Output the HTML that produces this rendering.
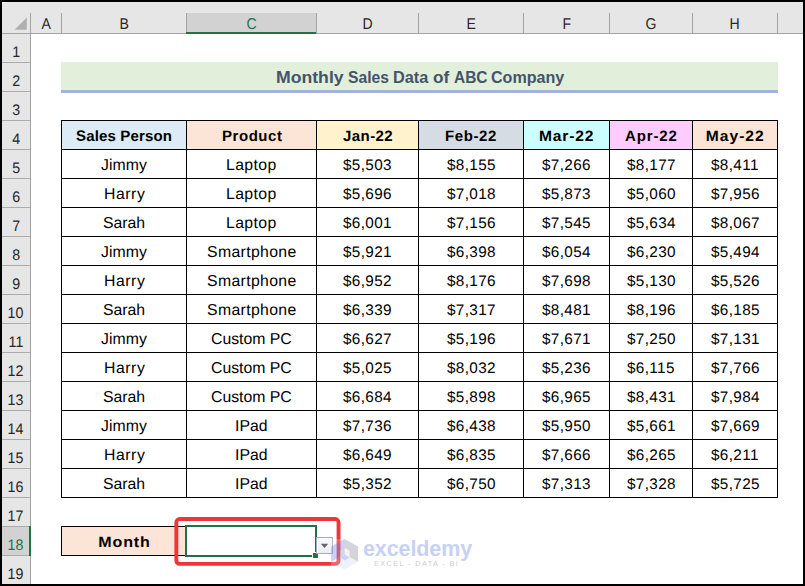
<!DOCTYPE html>
<html lang="en">
<head>
<meta charset="utf-8">
<title>Monthly Sales Data of ABC Company</title>
<style>
html,body{margin:0;padding:0;}
body{width:805px;height:586px;overflow:hidden;background:#000;font-family:"Liberation Sans",sans-serif;}
#sheet{position:absolute;left:2px;top:2px;width:801px;height:582px;background:#fff;overflow:hidden;}
.abs{position:absolute;}
#wrap{position:absolute;left:-2px;top:-2px;width:805px;height:586px;}
.hband{position:absolute;left:2px;top:2px;width:801px;height:31px;background:#E6E6E6;}
.hline{position:absolute;left:2px;top:33px;width:801px;height:1px;background:#A3A3A3;}
.rband{position:absolute;left:2px;top:34px;width:28px;height:550px;background:#E6E6E6;}
.rline{position:absolute;left:30px;top:13px;width:1px;height:571px;background:#A3A3A3;}
.csep{position:absolute;top:13px;width:1px;height:20px;background:#A3A3A3;}
.rsep{position:absolute;left:2px;width:28px;height:1px;background:#ABABAB;}
.cl{position:absolute;top:13px;height:20px;line-height:21px;text-align:center;color:#262626;font-size:15.6px;}
.cl span{display:inline-block;transform:rotate(0.03deg) scale(0.9,1);transform-origin:50% 80%;}
.rl span{display:inline-block;transform:rotate(0.03deg) scaleX(0.93);}
.rl{position:absolute;left:2px;width:28px;height:28px;line-height:36px;text-align:center;color:#262626;font-size:15.3px;}
.csel{background:#D2D2D2;color:#217346;}
.cselbar{position:absolute;height:2px;background:#217346;}
.title{position:absolute;left:61px;top:62px;width:717px;height:28px;background:#E2EFDA;border-bottom:3px solid #A0B4DE;text-align:center;line-height:29px;font-weight:bold;color:#44546A;font-size:17px;}
.tw{position:absolute;top:0;height:28px;line-height:31px;transform-origin:0 0;white-space:nowrap;}
.cell{position:absolute;height:28px;line-height:29px;text-align:center;color:#000;font-size:15.8px;white-space:nowrap;}
.hd{font-weight:bold;font-size:15px;}
.n{font-size:15.3px;letter-spacing:0.35px;}
.ub{display:inline-block;transform:translateY(-0.1px) rotate(0.03deg);}
.uc{display:inline-block;transform:translateY(0px) rotate(0.03deg);}
.u{display:inline-block;transform:rotate(0.03deg);margin-right:-0.35px;}
.vl{position:absolute;width:1px;background:#000;}
.hl{position:absolute;height:1px;background:#000;}

</style>
</head>
<body>
<div id="sheet"><div id="wrap">
<div class="hband"></div><div class="rband"></div>
<div class="abs" style="left:186px;top:13px;width:130px;height:19px;background:#D2D2D2"></div>
<div class="abs" style="left:2px;top:527px;width:27px;height:28px;background:#D2D2D2"></div>
<div class="abs" style="left:2px;top:2px;width:5px;height:1px;background:#F4F4F4"></div>
<div class="hline"></div><div class="rline"></div>
<div class="csep" style="left:61px"></div>
<div class="csep" style="left:186px"></div>
<div class="csep" style="left:316px"></div>
<div class="csep" style="left:418px"></div>
<div class="csep" style="left:523px"></div>
<div class="csep" style="left:609px"></div>
<div class="csep" style="left:692px"></div>
<div class="csep" style="left:777px"></div>
<div class="rsep" style="top:62px"></div>
<div class="rsep" style="top:91px"></div>
<div class="rsep" style="top:120px"></div>
<div class="rsep" style="top:149px"></div>
<div class="rsep" style="top:178px"></div>
<div class="rsep" style="top:207px"></div>
<div class="rsep" style="top:236px"></div>
<div class="rsep" style="top:265px"></div>
<div class="rsep" style="top:294px"></div>
<div class="rsep" style="top:323px"></div>
<div class="rsep" style="top:352px"></div>
<div class="rsep" style="top:381px"></div>
<div class="rsep" style="top:410px"></div>
<div class="rsep" style="top:439px"></div>
<div class="rsep" style="top:468px"></div>
<div class="rsep" style="top:497px"></div>
<div class="rsep" style="top:526px"></div>
<div class="rsep" style="top:555px"></div>
<div class="rsep" style="top:584px"></div>
<div class="cselbar" style="left:186px;top:32px;width:130px"></div>
<div class="abs" style="left:29px;top:526px;width:2px;height:30px;background:#217346"></div>
<svg class="abs" style="left:14px;top:17px" width="13" height="13" viewBox="0 0 13 13"><polygon points="12.8,0.4 12.8,12.8 0.5,12.8" fill="#B1B1B1"/></svg>
<div class="cl" style="left:31px;width:30px"><span>A</span></div>
<div class="cl" style="left:62px;width:124px"><span>B</span></div>
<div class="cl" style="left:187px;width:129px;color:#217346"><span>C</span></div>
<div class="cl" style="left:317px;width:101px"><span>D</span></div>
<div class="cl" style="left:419px;width:104px"><span>E</span></div>
<div class="cl" style="left:524px;width:85px"><span>F</span></div>
<div class="cl" style="left:610px;width:82px"><span>G</span></div>
<div class="cl" style="left:693px;width:84px"><span>H</span></div>
<div class="rl" style="top:34px"><span>1</span></div>
<div class="rl" style="top:63px"><span>2</span></div>
<div class="rl" style="top:92px"><span>3</span></div>
<div class="rl" style="top:121px"><span>4</span></div>
<div class="rl" style="top:150px"><span>5</span></div>
<div class="rl" style="top:179px"><span>6</span></div>
<div class="rl" style="top:208px"><span>7</span></div>
<div class="rl" style="top:237px"><span>8</span></div>
<div class="rl" style="top:266px"><span>9</span></div>
<div class="rl" style="top:295px"><span>10</span></div>
<div class="rl" style="top:324px"><span>11</span></div>
<div class="rl" style="top:353px"><span>12</span></div>
<div class="rl" style="top:382px"><span>13</span></div>
<div class="rl" style="top:411px"><span>14</span></div>
<div class="rl" style="top:440px"><span>15</span></div>
<div class="rl" style="top:469px"><span>16</span></div>
<div class="rl" style="top:498px"><span>17</span></div>
<div class="rl" style="top:527px;color:#217346"><span>18</span></div>
<div class="rl" style="top:556px"><span>19</span></div>
<div class="title">
<span class="tw" style="left:215.0px;transform:scaleX(1.0375)">Monthly</span>
<span class="tw" style="left:286.5px;transform:scaleX(0.9209)">Sales</span>
<span class="tw" style="left:332.0px;transform:scaleX(0.9556)">Data</span>
<span class="tw" style="left:372.4px;transform:scaleX(1.0133)">of</span>
<span class="tw" style="left:392.5px;transform:scaleX(0.9086)">ABC</span>
<span class="tw" style="left:429.8px;transform:scaleX(0.9461)">Company</span>
</div>
<div class="cell hd" style="left:62px;top:121px;width:124px;background:#DDEBF7"><span class="ub" style="letter-spacing:0.15px;margin-right:-0.15px">Sales Person</span></div>
<div class="cell hd" style="left:187px;top:121px;width:129px;background:#FCE4D6"><span class="ub" style="letter-spacing:0.55px;margin-right:-0.55px">Product</span></div>
<div class="cell hd" style="left:317px;top:121px;width:101px;background:#FFF2CC"><span class="ub" style="letter-spacing:0.43px;margin-right:-0.43px">Jan-22</span></div>
<div class="cell hd" style="left:419px;top:121px;width:104px;background:#D6DCE4"><span class="ub" style="letter-spacing:0.58px;margin-right:-0.58px">Feb-22</span></div>
<div class="cell hd" style="left:524px;top:121px;width:85px;background:#CCFFFF"><span class="ub" style="letter-spacing:0.8px;margin-right:-0.8px;transform:translateY(-0.1px) rotate(0.03deg) scaleX(1.04)">Mar-22</span></div>
<div class="cell hd" style="left:610px;top:121px;width:82px;background:#FFCCFF"><span class="ub" style="letter-spacing:0.88px;margin-right:-0.88px">Apr-22</span></div>
<div class="cell hd" style="left:693px;top:121px;width:84px;background:#FCE4D6"><span class="ub" style="letter-spacing:0.95px;margin-right:-0.95px;transform:translateY(-0.1px) rotate(0.03deg) scaleX(1.04)">May-22</span></div>
<div class="cell" style="left:62px;top:150px;width:124px"><span class="uc" style="letter-spacing:0.1px;margin-right:-0.1px">Jimmy</span></div>
<div class="cell" style="left:187px;top:150px;width:129px"><span class="uc" style="letter-spacing:0.4px;margin-right:-0.4px">Laptop</span></div>
<div class="cell n" style="left:317px;top:150px;width:101px"><span class="u">$5,503</span></div>
<div class="cell n" style="left:419px;top:150px;width:104px"><span class="u">$8,155</span></div>
<div class="cell n" style="left:524px;top:150px;width:85px"><span class="u">$7,266</span></div>
<div class="cell n" style="left:610px;top:150px;width:82px"><span class="u">$8,177</span></div>
<div class="cell n" style="left:693px;top:150px;width:84px"><span class="u">$8,411</span></div>
<div class="cell" style="left:62px;top:179px;width:124px"><span class="uc" style="letter-spacing:0.55px;margin-right:-0.55px">Harry</span></div>
<div class="cell" style="left:187px;top:179px;width:129px"><span class="uc" style="letter-spacing:0.4px;margin-right:-0.4px">Laptop</span></div>
<div class="cell n" style="left:317px;top:179px;width:101px"><span class="u">$5,696</span></div>
<div class="cell n" style="left:419px;top:179px;width:104px"><span class="u">$7,018</span></div>
<div class="cell n" style="left:524px;top:179px;width:85px"><span class="u">$5,873</span></div>
<div class="cell n" style="left:610px;top:179px;width:82px"><span class="u">$5,060</span></div>
<div class="cell n" style="left:693px;top:179px;width:84px"><span class="u">$7,956</span></div>
<div class="cell" style="left:62px;top:208px;width:124px"><span class="uc" style="letter-spacing:0px;margin-right:-0px">Sarah</span></div>
<div class="cell" style="left:187px;top:208px;width:129px"><span class="uc" style="letter-spacing:0.4px;margin-right:-0.4px">Laptop</span></div>
<div class="cell n" style="left:317px;top:208px;width:101px"><span class="u">$6,001</span></div>
<div class="cell n" style="left:419px;top:208px;width:104px"><span class="u">$7,156</span></div>
<div class="cell n" style="left:524px;top:208px;width:85px"><span class="u">$7,545</span></div>
<div class="cell n" style="left:610px;top:208px;width:82px"><span class="u">$5,634</span></div>
<div class="cell n" style="left:693px;top:208px;width:84px"><span class="u">$8,067</span></div>
<div class="cell" style="left:62px;top:237px;width:124px"><span class="uc" style="letter-spacing:0.1px;margin-right:-0.1px">Jimmy</span></div>
<div class="cell" style="left:187px;top:237px;width:129px"><span class="uc" style="letter-spacing:0.35px;margin-right:-0.35px">Smartphone</span></div>
<div class="cell n" style="left:317px;top:237px;width:101px"><span class="u">$5,921</span></div>
<div class="cell n" style="left:419px;top:237px;width:104px"><span class="u">$6,398</span></div>
<div class="cell n" style="left:524px;top:237px;width:85px"><span class="u">$6,054</span></div>
<div class="cell n" style="left:610px;top:237px;width:82px"><span class="u">$6,230</span></div>
<div class="cell n" style="left:693px;top:237px;width:84px"><span class="u">$5,494</span></div>
<div class="cell" style="left:62px;top:266px;width:124px"><span class="uc" style="letter-spacing:0.55px;margin-right:-0.55px">Harry</span></div>
<div class="cell" style="left:187px;top:266px;width:129px"><span class="uc" style="letter-spacing:0.35px;margin-right:-0.35px">Smartphone</span></div>
<div class="cell n" style="left:317px;top:266px;width:101px"><span class="u">$6,952</span></div>
<div class="cell n" style="left:419px;top:266px;width:104px"><span class="u">$8,176</span></div>
<div class="cell n" style="left:524px;top:266px;width:85px"><span class="u">$7,698</span></div>
<div class="cell n" style="left:610px;top:266px;width:82px"><span class="u">$5,130</span></div>
<div class="cell n" style="left:693px;top:266px;width:84px"><span class="u">$5,526</span></div>
<div class="cell" style="left:62px;top:295px;width:124px"><span class="uc" style="letter-spacing:0px;margin-right:-0px">Sarah</span></div>
<div class="cell" style="left:187px;top:295px;width:129px"><span class="uc" style="letter-spacing:0.35px;margin-right:-0.35px">Smartphone</span></div>
<div class="cell n" style="left:317px;top:295px;width:101px"><span class="u">$6,339</span></div>
<div class="cell n" style="left:419px;top:295px;width:104px"><span class="u">$7,317</span></div>
<div class="cell n" style="left:524px;top:295px;width:85px"><span class="u">$8,481</span></div>
<div class="cell n" style="left:610px;top:295px;width:82px"><span class="u">$8,196</span></div>
<div class="cell n" style="left:693px;top:295px;width:84px"><span class="u">$6,185</span></div>
<div class="cell" style="left:62px;top:324px;width:124px"><span class="uc" style="letter-spacing:0.1px;margin-right:-0.1px">Jimmy</span></div>
<div class="cell" style="left:187px;top:324px;width:129px"><span class="uc" style="letter-spacing:0px;margin-right:-0px">Custom PC</span></div>
<div class="cell n" style="left:317px;top:324px;width:101px"><span class="u">$6,627</span></div>
<div class="cell n" style="left:419px;top:324px;width:104px"><span class="u">$5,196</span></div>
<div class="cell n" style="left:524px;top:324px;width:85px"><span class="u">$7,671</span></div>
<div class="cell n" style="left:610px;top:324px;width:82px"><span class="u">$7,250</span></div>
<div class="cell n" style="left:693px;top:324px;width:84px"><span class="u">$7,131</span></div>
<div class="cell" style="left:62px;top:353px;width:124px"><span class="uc" style="letter-spacing:0.55px;margin-right:-0.55px">Harry</span></div>
<div class="cell" style="left:187px;top:353px;width:129px"><span class="uc" style="letter-spacing:0px;margin-right:-0px">Custom PC</span></div>
<div class="cell n" style="left:317px;top:353px;width:101px"><span class="u">$5,025</span></div>
<div class="cell n" style="left:419px;top:353px;width:104px"><span class="u">$8,032</span></div>
<div class="cell n" style="left:524px;top:353px;width:85px"><span class="u">$5,236</span></div>
<div class="cell n" style="left:610px;top:353px;width:82px"><span class="u">$6,115</span></div>
<div class="cell n" style="left:693px;top:353px;width:84px"><span class="u">$7,766</span></div>
<div class="cell" style="left:62px;top:382px;width:124px"><span class="uc" style="letter-spacing:0px;margin-right:-0px">Sarah</span></div>
<div class="cell" style="left:187px;top:382px;width:129px"><span class="uc" style="letter-spacing:0px;margin-right:-0px">Custom PC</span></div>
<div class="cell n" style="left:317px;top:382px;width:101px"><span class="u">$6,684</span></div>
<div class="cell n" style="left:419px;top:382px;width:104px"><span class="u">$5,898</span></div>
<div class="cell n" style="left:524px;top:382px;width:85px"><span class="u">$6,965</span></div>
<div class="cell n" style="left:610px;top:382px;width:82px"><span class="u">$8,431</span></div>
<div class="cell n" style="left:693px;top:382px;width:84px"><span class="u">$7,984</span></div>
<div class="cell" style="left:62px;top:411px;width:124px"><span class="uc" style="letter-spacing:0.1px;margin-right:-0.1px">Jimmy</span></div>
<div class="cell" style="left:187px;top:411px;width:129px"><span class="uc" style="letter-spacing:0px;margin-right:-0px">IPad</span></div>
<div class="cell n" style="left:317px;top:411px;width:101px"><span class="u">$7,736</span></div>
<div class="cell n" style="left:419px;top:411px;width:104px"><span class="u">$6,438</span></div>
<div class="cell n" style="left:524px;top:411px;width:85px"><span class="u">$5,950</span></div>
<div class="cell n" style="left:610px;top:411px;width:82px"><span class="u">$5,661</span></div>
<div class="cell n" style="left:693px;top:411px;width:84px"><span class="u">$7,669</span></div>
<div class="cell" style="left:62px;top:440px;width:124px"><span class="uc" style="letter-spacing:0.55px;margin-right:-0.55px">Harry</span></div>
<div class="cell" style="left:187px;top:440px;width:129px"><span class="uc" style="letter-spacing:0px;margin-right:-0px">IPad</span></div>
<div class="cell n" style="left:317px;top:440px;width:101px"><span class="u">$6,649</span></div>
<div class="cell n" style="left:419px;top:440px;width:104px"><span class="u">$6,835</span></div>
<div class="cell n" style="left:524px;top:440px;width:85px"><span class="u">$7,666</span></div>
<div class="cell n" style="left:610px;top:440px;width:82px"><span class="u">$6,265</span></div>
<div class="cell n" style="left:693px;top:440px;width:84px"><span class="u">$6,211</span></div>
<div class="cell" style="left:62px;top:469px;width:124px"><span class="uc" style="letter-spacing:0px;margin-right:-0px">Sarah</span></div>
<div class="cell" style="left:187px;top:469px;width:129px"><span class="uc" style="letter-spacing:0px;margin-right:-0px">IPad</span></div>
<div class="cell n" style="left:317px;top:469px;width:101px"><span class="u">$5,352</span></div>
<div class="cell n" style="left:419px;top:469px;width:104px"><span class="u">$6,750</span></div>
<div class="cell n" style="left:524px;top:469px;width:85px"><span class="u">$7,313</span></div>
<div class="cell n" style="left:610px;top:469px;width:82px"><span class="u">$7,328</span></div>
<div class="cell n" style="left:693px;top:469px;width:84px"><span class="u">$5,725</span></div>
<div class="vl" style="left:61px;top:120px;height:378px"></div>
<div class="vl" style="left:186px;top:120px;height:378px"></div>
<div class="vl" style="left:316px;top:120px;height:378px"></div>
<div class="vl" style="left:418px;top:120px;height:378px"></div>
<div class="vl" style="left:523px;top:120px;height:378px"></div>
<div class="vl" style="left:609px;top:120px;height:378px"></div>
<div class="vl" style="left:692px;top:120px;height:378px"></div>
<div class="vl" style="left:777px;top:120px;height:378px"></div>
<div class="hl" style="left:61px;top:120px;width:717px"></div>
<div class="hl" style="left:61px;top:149px;width:717px"></div>
<div class="hl" style="left:61px;top:178px;width:717px"></div>
<div class="hl" style="left:61px;top:207px;width:717px"></div>
<div class="hl" style="left:61px;top:236px;width:717px"></div>
<div class="hl" style="left:61px;top:265px;width:717px"></div>
<div class="hl" style="left:61px;top:294px;width:717px"></div>
<div class="hl" style="left:61px;top:323px;width:717px"></div>
<div class="hl" style="left:61px;top:352px;width:717px"></div>
<div class="hl" style="left:61px;top:381px;width:717px"></div>
<div class="hl" style="left:61px;top:410px;width:717px"></div>
<div class="hl" style="left:61px;top:439px;width:717px"></div>
<div class="hl" style="left:61px;top:468px;width:717px"></div>
<div class="hl" style="left:61px;top:497px;width:717px"></div>
<div class="cell hd" style="left:62px;top:527px;width:124px;background:#FCE4D6"><span class="ub" style="letter-spacing:0.8px;margin-right:-0.8px;transform:translateY(-0.1px) rotate(0.03deg) scaleX(1.07)">Month</span></div>
<div class="hl" style="left:61px;top:526px;width:125px"></div><div class="hl" style="left:61px;top:555px;width:125px"></div><div class="vl" style="left:61px;top:526px;height:30px"></div>
<div class="abs" style="left:185px;top:525px;width:128px;height:28px;border:2px solid #217346;background:#fff"></div>
<div class="abs" style="left:312px;top:552px;width:5px;height:5px;background:#217346;border:1px solid #fff"></div>
<div class="abs" style="left:316px;top:537px;width:15px;height:15px;border:1px solid #A4A9B4;background:linear-gradient(#F8F9FB,#ECEEF3);box-shadow:inset 1px 1px 0 #fff"></div>
<svg class="abs" style="left:320px;top:543px" width="9" height="6" viewBox="0 0 9 6"><polygon points="0.8,0.8 8.2,0.8 4.5,5" fill="#646464"/></svg>
<svg class="abs" style="left:170px;top:512px" width="176" height="60" viewBox="170 512 176 60"><rect x="176.35" y="519.05" width="162.2" height="44.8" rx="3.3" ry="3.3" fill="none" stroke="#EE3539" stroke-width="3.9"/></svg>
<svg class="abs" style="left:328px;top:534px" width="36" height="40" viewBox="0 0 36 40">
<rect x="3" y="5" width="33" height="31" fill="#fff" fill-opacity="0.22"/>
<polygon points="3.1,12.6 16.4,5.1 16.4,20.3 3.1,27.7" fill="#4B69E1" fill-opacity="0.3"/>
<polygon points="16.4,5.1 30.05,12.6 30.05,27.7 16.4,20.3" fill="#5F646E" fill-opacity="0.27"/>
<polygon points="3.1,27.7 16.4,20.3 30.05,27.7 16.4,35.5" fill="#96AAD2" fill-opacity="0.16"/>
<polygon points="12.6,16.4 16.7,14 16.7,20.5 12.6,23.6" fill="#D6D8DC"/>
<polygon points="16.7,14 21.5,16.4 21.5,23.6 16.7,20.5" fill="#F3F4F8"/>
<polygon points="12.6,23.6 16.7,20.5 21.5,23.6 16.7,26.6" fill="#CBD3F6"/>
</svg>
<div class="abs" style="left:363px;top:533.3px;font-size:21.5px;line-height:32px;height:32px;font-weight:bold;color:#C7D1F4;letter-spacing:-0.1px;white-space:nowrap">exceldemy</div>
<div class="abs" style="left:374px;top:558px;font-size:7.4px;line-height:12px;height:12px;color:#CDCDCD;letter-spacing:1.35px;white-space:nowrap">EXCEL - DATA - BI</div>
</div></div>
</body>
</html>
